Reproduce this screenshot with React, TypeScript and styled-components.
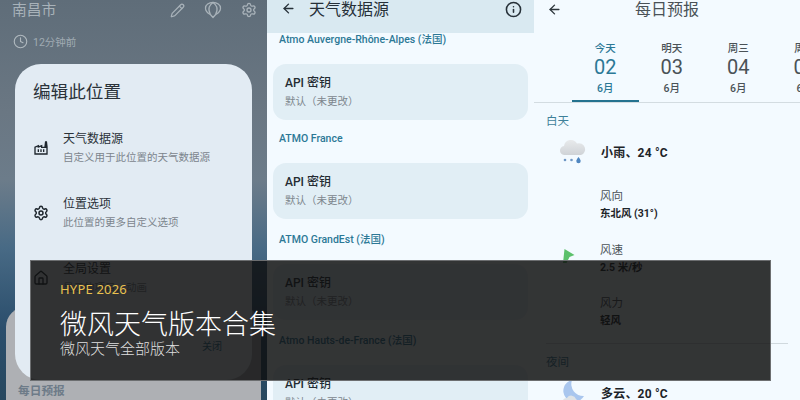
import React from "react";
import styled, { createGlobalStyle } from "styled-components";
import { ArrowLeft, Clock, Home, Info, Pencil, Settings } from "lucide-react";

const Global = createGlobalStyle`
  html, body { margin: 0; padding: 0; background: #f3faff; overflow: hidden; }
  * { box-sizing: border-box; }
  body { font-family: Roboto, "Noto Sans CJK SC", sans-serif; }
`;

const Stage = styled.div`
  position: relative;
  width: 800px;
  height: 400px;
  display: grid;
  grid-template-columns: 267px 267px 266px;
  overflow: hidden;
`;

/* Left phone */
const LeftPane = styled.section`
  position: relative;
  height: 400px;
  overflow: hidden;
  display: flex;
  flex-direction: column;
  background: linear-gradient(180deg, #5f6d79 0%, #6a7783 28%, #6c7c8a 45%, #486a85 62%, #2b4e6c 82%, #27485f 100%);
`;
const CityBar = styled.div`
  flex: none;
  display: flex;
  align-items: center;
  height: 20px;
  padding: 0 10px 0 12px;
  color: #a8b2b9;
`;
const City = styled.div`
  flex: 1;
  font-size: 14.7px;
  line-height: 20px;
`;
const CityActions = styled.div`
  display: flex;
  align-items: center;
  gap: 19px;
`;
const Updated = styled.div`
  flex: none;
  display: flex;
  align-items: center;
  gap: 5px;
  margin: 12px 0 0 13px;
  height: 18px;
  font-size: 10.5px;
  color: #a0abb3;
  svg { color: #b0b9bf; }
`;
const PeekCard = styled.div`
  margin: 257px 6px 0;
  flex: 1;
  padding: 76px 12px 0;
  border-radius: 20px 20px 0 0;
  background: #aeb0b4;
  font-size: 11.7px;
  font-weight: 700;
  line-height: 17px;
  color: #6d7b88;
`;
const Dialog = styled.div`
  position: absolute;
  left: 15px;
  top: 64px;
  width: 237px;
  height: 316px;
  border-radius: 26px;
  background: #e2ebf3;
  padding: 18px 18px 0;
  display: flex;
  flex-direction: column;
`;
const DialogTitle = styled.div`
  font-size: 17.6px;
  line-height: 20px;
  color: #2a3239;
  margin-bottom: 27px;
`;
const DialogItem = styled.div`
  display: flex;
  align-items: center;
  height: 38px;
  margin-bottom: 27px;
`;
const ItemIcon = styled.div`
  width: 30px;
  display: flex;
  color: #1e262d;
`;
const ItemText = styled.div`
  display: flex;
  flex-direction: column;
  gap: 3px;
`;
const ItemTitle = styled.div`
  font-size: 12px;
  line-height: 16px;
  color: #2a3138;
`;
const ItemSub = styled.div`
  font-size: 10.5px;
  line-height: 15px;
  color: #7c858d;
  white-space: nowrap;
`;
const DialogClose = styled.div`
  position: absolute;
  right: 30px;
  bottom: 26px;
  font-size: 10px;
  line-height: 14px;
  color: #2a6d8c;
`;

/* Middle phone */
const MidPane = styled.section`
  height: 400px;
  overflow: hidden;
  background: #f3faff;
`;
const MidHeader = styled.header`
  height: 33px;
  display: flex;
  align-items: flex-start;
  padding: 1px 12px 0 14px;
  background: #d9e9f1;
  color: #263038;
`;
const MidTitle = styled.div`
  flex: 1;
  margin-left: 13px;
  font-size: 16px;
  line-height: 17px;
`;
const MidBody = styled.div`
  display: flex;
  flex-direction: column;
  margin-top: -2px;
  padding: 0 6px;
`;
const SourceName = styled.div`
  margin: 0 6px;
  font-size: 10.5px;
  font-weight: 500;
  color: #2b7896;
  white-space: nowrap;
`;
const SourceCard = styled.div`
  flex: none;
  height: 56px;
  margin: 18px 0 12px;
  padding: 11px 12px 0;
  border-radius: 13px;
  background: #e1eef5;
`;
const CardTitle = styled.div`
  font-size: 12px;
  font-weight: 500;
  line-height: 17px;
  color: #242c32;
`;
const CardSub = styled.div`
  margin-top: 2px;
  font-size: 10.5px;
  line-height: 15px;
  color: #7d868d;
`;

/* Right phone */
const RightPane = styled.section`
  height: 400px;
  overflow: hidden;
  background: #f3faff;
  display: flex;
  flex-direction: column;
`;
const DailyHeader = styled.header`
  flex: none;
  position: relative;
  height: 18px;
  display: flex;
  justify-content: center;
  color: #2c353b;
`;
const BackSlot = styled.span`
  position: absolute;
  left: 13px;
  top: 2px;
  display: flex;
`;
const DailyTitle = styled.div`
  font-size: 16px;
  line-height: 19px;
  color: #4a5257;
`;
const Tabs = styled.div`
  flex: none;
  display: flex;
  height: 62px;
  margin-top: 23px;
  padding-left: 38px;
  border-bottom: 1px solid #d3dce1;
  width: 266px;
  overflow: hidden;
`;
const Tab = styled.div<{ $on?: boolean }>`
  flex: 0 0 66.5px;
  height: 61px;
  display: flex;
  flex-direction: column;
  align-items: center;
  color: ${(p) => (p.$on ? "#2b7896" : "#4a5257")};
  border-bottom: ${(p) => (p.$on ? "2px solid #24728f" : "2px solid transparent")};
`;
const TabDay = styled.div`
  font-size: 10.5px;
  font-weight: 500;
  line-height: 15px;
`;
const TabNum = styled.div`
  font-size: 20px;
  line-height: 22px;
`;
const TabMonth = styled.div`
  font-size: 10.5px;
  font-weight: 500;
  line-height: 15px;
  margin-top: 3px;
`;
const DayBlock = styled.div`
  flex: none;
  display: flex;
  flex-direction: column;
  padding: 10px 12px 0;
`;
const PartLabel = styled.div`
  font-size: 11.5px;
  line-height: 16px;
  color: #3e8099;
`;
const NightLabel = styled(PartLabel)`
  margin-top: 10px;
`;
const Summary = styled.div`
  flex: none;
  display: flex;
  align-items: center;
  height: 28px;
  margin-top: 8px;
`;
const SummaryIcon = styled.div`
  width: 55px;
  padding-left: 13px;
  display: flex;
`;
const SummaryText = styled.div`
  font-size: 12px;
  font-weight: 700;
  letter-spacing: 0.2px;
  color: #1c2328;
`;
const Details = styled.div`
  flex: none;
  height: 155px;
  margin-top: 23px;
`;
const Detail = styled.div`
  position: relative;
  margin: 0 0 0 54px;
  height: 53.5px;
  display: flex;
  flex-direction: column;
  gap: 3px;
`;
const DetailLabel = styled.div`
  font-size: 11.5px;
  line-height: 16px;
  color: #4b5358;
`;
const DetailValue = styled.div`
  font-size: 10.5px;
  font-weight: 700;
  line-height: 14px;
  color: #1e252a;
`;
const DetailFlag = styled.span`
  position: absolute;
  left: -37px;
  top: 7px;
  display: flex;
`;
const Rule = styled.div`
  flex: none;
  height: 1px;
  background: #d0d9de;
`;

/* Video overlay */
const Caption = styled.aside`
  position: absolute;
  left: 30px;
  top: 260px;
  width: 741px;
  height: 121px;
  border: 1px solid #6c6e70;
  background: rgba(14, 14, 14, 0.84);
  padding: 19px 29px 0;
  display: flex;
  flex-direction: column;
`;
const Kicker = styled.div`
  font-family: "Noto Sans", sans-serif;
  font-size: 13px;
  letter-spacing: 0.2px;
  line-height: 18px;
  color: #e9c14f;
`;
const CaptionTitle = styled.div`
  margin-top: 7px;
  font-family: "Noto Sans CJK SC", sans-serif;
  font-weight: 300;
  font-size: 27px;
  line-height: 36px;
  color: #ffffff;
`;
const CaptionSub = styled.div`
  margin-top: -3px;
  font-family: "Noto Sans CJK SC", sans-serif;
  font-weight: 300;
  font-size: 15px;
  line-height: 20px;
  color: #dfdfdf;
`;

const Factory = () => (
  <svg width="16" height="16" viewBox="0 0 24 24" fill="currentColor">
    <path
      fillRule="evenodd"
      d="M22 22H2V10l7-3v2l5-2v3h3l1-8h3l1 8v12zM12 9.95l-5 2V10l-3 1.32V20h16v-8h-8V9.95zM11 18h2v-4h-2v4zM7 18h2v-4H7v4zM17 14h-2v4h2v-4z"
    />
  </svg>
);

const Balloon = () => (
  <svg width="18" height="18" viewBox="0 0 24 24" fill="none" stroke="currentColor" strokeWidth="1.7" strokeLinejoin="round" strokeLinecap="round">
    <path d="M12 22l-3.500-4C5 16 2 13 2 9.500 2 5 6.500 2 12 2s10 3 10 7.500c0 3.500-3 6.500-6.500 8.500z" />
    <path d="M8.500 18C6.500 14 6 11 7 8c1-3 3-4.500 5-6 2 1.500 4 3 5 6 1 3 .5 6-1.500 10" />
  </svg>
);

const RainCloud = () => (
  <svg width="28" height="28" viewBox="0 0 28 28">
    <defs>
      <linearGradient id="rc" x1="0" y1="0" x2="0" y2="1">
        <stop offset="0" stopColor="#e8eaec" />
        <stop offset="1" stopColor="#cfd3d7" />
      </linearGradient>
    </defs>
    <path d="M6 18a4.500 4.500 0 0 1-1-9 7 7 0 0 1 13-2.500A5.500 5.500 0 0 1 22 18z" fill="url(#rc)" />
    <circle cx="6" cy="23" r="1.300" fill="#6f97c4" />
    <circle cx="12.500" cy="23" r="1.300" fill="#6f97c4" />
    <path d="M19.500 20c1.500 2 2.200 3 2.200 4a2.200 2.200 0 0 1-4.400 0c0-1 .7-2 2.200-4z" fill="#4f86c0" />
  </svg>
);

const MoonCloud = () => (
  <svg width="28" height="28" viewBox="0 0 28 28">
    <path d="M13 2a11 11 0 1 0 12 16A12 12 0 0 1 13 2z" fill="#a9c6ee" />
    <path d="M4 26a4 4 0 0 1 4-6 5 5 0 0 1 9 1 3 3 0 0 1 0 5z" fill="#dfe3e6" />
  </svg>
);

const WindFlag = () => (
  <svg width="12" height="14" viewBox="0 0 12 14">
    <path d="M1.500 0L11.500 6 6.500 8 3.500 14 0 14z" fill="#5cc16c" />
  </svg>
);

const sources = [
  "Atmo Auvergne-Rhône-Alpes (法国)",
  "ATMO France",
  "ATMO GrandEst (法国)",
  "Atmo Hauts-de-France (法国)",
];

const days = [
  { d: "今天", n: "02", on: true },
  { d: "明天", n: "03" },
  { d: "周三", n: "04" },
  { d: "周四", n: "05" },
];

const App: React.FC = () => (
  <>
    <Global />
    <Stage>
      <LeftPane>
        <CityBar>
          <City>南昌市</City>
          <CityActions>
            <Pencil size={15} strokeWidth={2} />
            <Balloon />
            <Settings size={16} strokeWidth={2} />
          </CityActions>
        </CityBar>
        <Updated>
          <Clock size={15} strokeWidth={1.8} />
          12分钟前
        </Updated>
        <PeekCard>每日预报</PeekCard>
        <Dialog>
          <DialogTitle>编辑此位置</DialogTitle>
          <DialogItem>
            <ItemIcon>
              <Factory />
            </ItemIcon>
            <ItemText>
              <ItemTitle>天气数据源</ItemTitle>
              <ItemSub>自定义用于此位置的天气数据源</ItemSub>
            </ItemText>
          </DialogItem>
          <DialogItem>
            <ItemIcon>
              <Settings size={16} strokeWidth={2.2} />
            </ItemIcon>
            <ItemText>
              <ItemTitle>位置选项</ItemTitle>
              <ItemSub>此位置的更多自定义选项</ItemSub>
            </ItemText>
          </DialogItem>
          <DialogItem>
            <ItemIcon>
              <Home size={16} strokeWidth={2} />
            </ItemIcon>
            <ItemText>
              <ItemTitle>全局设置</ItemTitle>
              <ItemSub>显示的项目，动画</ItemSub>
            </ItemText>
          </DialogItem>
          <DialogClose>关闭</DialogClose>
        </Dialog>
      </LeftPane>

      <MidPane>
        <MidHeader>
          <ArrowLeft size={15} strokeWidth={2.2} />
          <MidTitle>天气数据源</MidTitle>
          <Info size={17} strokeWidth={2.2} />
        </MidHeader>
        <MidBody>
          {sources.map((s) => (
            <React.Fragment key={s}>
              <SourceName>{s}</SourceName>
              <SourceCard>
                <CardTitle>API 密钥</CardTitle>
                <CardSub>默认（未更改）</CardSub>
              </SourceCard>
            </React.Fragment>
          ))}
        </MidBody>
      </MidPane>

      <RightPane>
        <DailyHeader>
          <BackSlot>
            <ArrowLeft size={15} strokeWidth={2.2} />
          </BackSlot>
          <DailyTitle>每日预报</DailyTitle>
        </DailyHeader>
        <Tabs>
          {days.map((t) => (
            <Tab key={t.n} $on={t.on}>
              <TabDay>{t.d}</TabDay>
              <TabNum>{t.n}</TabNum>
              <TabMonth>6月</TabMonth>
            </Tab>
          ))}
        </Tabs>
        <DayBlock>
          <PartLabel>白天</PartLabel>
          <Summary>
            <SummaryIcon>
              <RainCloud />
            </SummaryIcon>
            <SummaryText>小雨、24 °C</SummaryText>
          </Summary>
          <Details>
            <Detail>
              <DetailLabel>风向</DetailLabel>
              <DetailValue>东北风 (31°)</DetailValue>
            </Detail>
            <Detail>
              <DetailFlag>
                <WindFlag />
              </DetailFlag>
              <DetailLabel>风速</DetailLabel>
              <DetailValue>2.5 米/秒</DetailValue>
            </Detail>
            <Detail>
              <DetailLabel>风力</DetailLabel>
              <DetailValue>轻风</DetailValue>
            </Detail>
          </Details>
          <Rule />
          <NightLabel>夜间</NightLabel>
          <Summary>
            <SummaryIcon>
              <MoonCloud />
            </SummaryIcon>
            <SummaryText>多云、20 °C</SummaryText>
          </Summary>
        </DayBlock>
      </RightPane>

      <Caption>
        <Kicker>HYPE 2026</Kicker>
        <CaptionTitle>微风天气版本合集</CaptionTitle>
        <CaptionSub>微风天气全部版本</CaptionSub>
      </Caption>
    </Stage>
  </>
);

export default App;
